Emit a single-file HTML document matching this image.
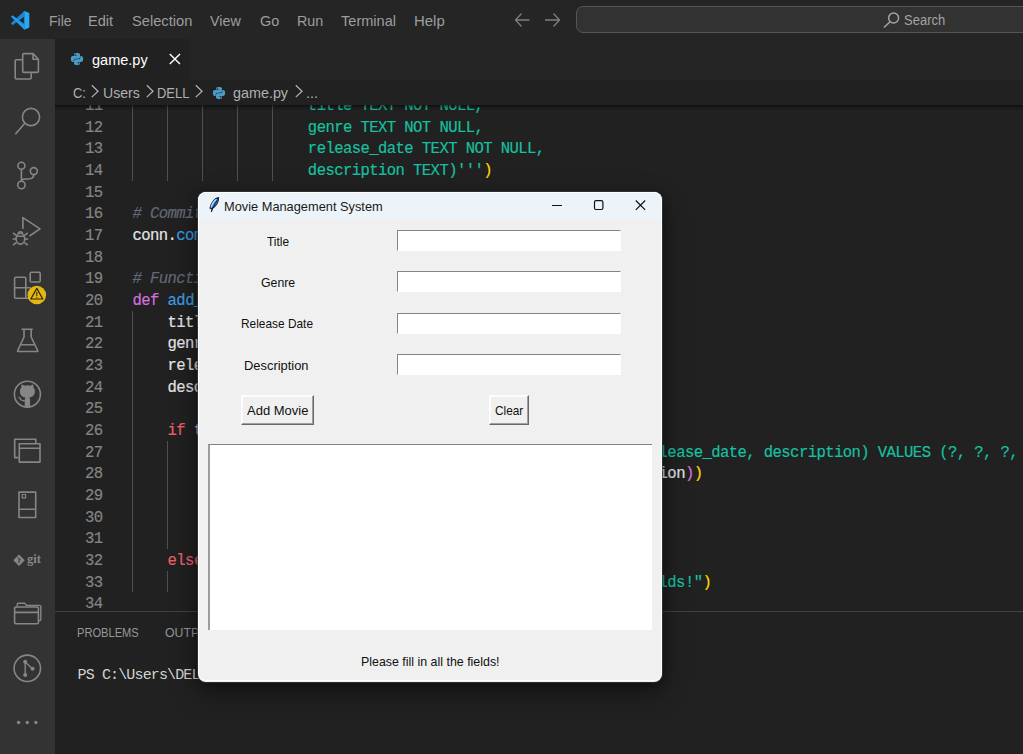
<!DOCTYPE html>
<html lang="en">
<head>
<meta charset="utf-8">
<title>game.py - Visual Studio Code</title>
<style>
html,body{margin:0;padding:0;}
body{width:1023px;height:754px;overflow:hidden;background:#212121;position:relative;font-family:"Liberation Sans",sans-serif;}
.abs{position:absolute;}
.t{position:absolute;white-space:pre;transform-origin:0 50%;line-height:1;}
/* ---------- title bar ---------- */
#titlebar{left:0;top:0;width:1023px;height:39px;background:#252525;}
.menu{color:#9d9d9d;font-size:15px;top:13px;}
#searchbox{left:576px;top:6px;width:460px;height:27px;box-sizing:border-box;border:1px solid #555;border-radius:7px;background:#323232;}
/* ---------- activity bar ---------- */
#activity{left:0;top:39px;width:55px;height:715px;background:#333333;}
/* ---------- tabs ---------- */
#tabbar{left:55px;top:39px;width:968px;height:41px;background:#252525;}
#tab{left:55px;top:39px;width:134.5px;height:41px;background:#212121;}
#crumbs{left:55px;top:80px;width:968px;height:25px;background:#212121;}
.crumb{color:#b0b0b0;font-size:15.5px;top:84.6px;}
/* ---------- editor ---------- */
#editor{left:55px;top:105px;width:968px;height:506px;background:#212121;overflow:hidden;}
#shadow{left:55px;top:105px;width:968px;height:6px;background:linear-gradient(rgba(0,0,0,.55),rgba(0,0,0,.25) 35%,rgba(0,0,0,0));}
.ln{position:absolute;left:0;width:47.6px;text-align:right;color:#858585;}
.cl{position:absolute;left:77.5px;white-space:pre;color:#e6e6e6;}
.code{-webkit-text-stroke:0.18px currentColor;font-family:"Liberation Mono",monospace;font-size:15.6px;letter-spacing:-0.59px;line-height:21.66px;}
.guide{position:absolute;width:1px;background:#4d5156;}
.s{color:#17c0a0;} .k{color:#d270dc;} .c{color:#616a78;font-style:italic;} .f{color:#3b9ee5;} .r{color:#e8606a;} .y{color:#ffd700;} .p{color:#da70d6;}
/* ---------- panel ---------- */
#panel{left:55px;top:611px;width:968px;height:143px;background:#212121;border-top:1px solid #424242;box-sizing:border-box;}
.ptab{color:#969696;font-size:13.2px;top:626px;}
#term{left:77.5px;top:668.2px;height:12.5px;overflow:hidden;color:#d4d4d4;font-family:"Liberation Mono",monospace;font-size:15px;letter-spacing:-0.86px;}
/* ---------- dialog ---------- */
#dlg{left:198px;top:192px;width:464px;height:489.5px;background:#f0f0f0;border-radius:8px;overflow:hidden;box-shadow:0 0 0 1px rgba(70,70,70,.55),0 10px 28px rgba(0,0,0,.45),0 2px 10px rgba(0,0,0,.35);}
#dlgtitle{left:0;top:0;width:464px;height:27.5px;background:#edf4f9;}
#dlgedge{left:0;top:0;width:464px;height:489px;border-radius:8px;box-sizing:border-box;border:1px solid rgba(255,255,255,.85);}
.dl{color:#111;font-size:12.9px;}
.entry{position:absolute;left:199px;width:224px;height:21px;box-sizing:border-box;background:#fff;border-top:1px solid #848484;border-left:1px solid #848484;border-right:1px solid #fff;border-bottom:1px solid #fff;}
.btn{position:absolute;height:30px;box-sizing:border-box;background:#f0f0f0;border-top:1px solid #fff;border-left:1px solid #fff;border-right:1px solid #696969;border-bottom:1px solid #696969;box-shadow:inset -1px -1px 0 #a0a0a0,inset 1px 1px 0 #fbfbfb;}
#listbox{left:10px;top:252px;width:444px;height:185.5px;box-sizing:border-box;background:#fff;border-top:1px solid #828282;border-left:2px solid #9c9c9c;}
</style>
</head>
<body>
<!-- TITLEBAR -->
<div id="titlebar" class="abs">
<svg class="abs" style="left:0;top:0" width="40" height="39" viewBox="0 0 40 39">
<path d="M24.400 11 10.900 23.300 12.500 25.200 24.200 16.700Z" fill="#1489d6"/>
<path d="M24.400 11 29.300 13.100V27.500L24.400 29.700Z" fill="#2aa7f5"/>
<path d="M24.400 29.700 10.900 16.800 12.500 15.200 24.100 23.900 24.400 24Z" fill="#1b9af0"/>
<path d="M24.400 11 24.400 29.700 23.900 29.300 23.900 11.600Z" fill="#2aa7f5"/>
</svg>
<span class="t menu" id="m1" style="transform:scaleX(0.936);left:48.5px">File</span>
<span class="t menu" id="m2" style="transform:scaleX(0.974);left:88.4px">Edit</span>
<span class="t menu" id="m3" style="transform:scaleX(0.978);left:131.9px">Selection</span>
<span class="t menu" id="m4" style="transform:scaleX(0.955);left:210.1px">View</span>
<span class="t menu" id="m5" style="transform:scaleX(0.963);left:259.5px">Go</span>
<span class="t menu" id="m6" style="transform:scaleX(0.955);left:296.8px">Run</span>
<span class="t menu" id="m7" style="transform:scaleX(0.971);left:340.9px">Terminal</span>
<span class="t menu" id="m8" style="transform:scaleX(0.997);left:413.9px">Help</span>
<svg class="abs" style="left:513px;top:11px" width="50" height="18" viewBox="0 0 50 18" fill="none" stroke="#7f7f7f" stroke-width="1.3">
<path d="M16.500 9H2.500M8.500 2.500 2.500 9l6 6.500"/>
<path d="M32 9h14.500M40.500 2.500l6 6.500-6 6.500"/>
</svg>
<div id="searchbox" class="abs"></div>
<svg class="abs" style="left:882px;top:11px" width="19" height="18" viewBox="0 0 19 18" fill="none" stroke="#a3a3a3" stroke-width="1.500">
<circle cx="11.600" cy="7" r="5"/><path d="M8 10.800 2 16.500"/>
</svg>
<span class="t" id="srch" style="transform:scaleX(0.930);left:904.0px;top:13px;color:#a3a3a3;font-size:14px">Search</span>
</div>
<!-- TABS -->
<div id="tabbar" class="abs"></div>
<div id="tab" class="abs"></div>
<svg class="abs" style="left:70px;top:52px" width="14" height="14" viewBox="0 0 32 32"><path fill="#4a9bc8" d="M15.900 2c-7 0-6.600 3-6.600 3v3.200h6.800v1H6.600S2 8.700 2 15.800s4 6.900 4 6.900h2.400v-3.300s-.1-4 3.900-4h6.700s3.800.1 3.800-3.700V5.600S23.400 2 15.900 2zm-3.700 2.100a1.200 1.200 0 1 1 0 2.400 1.200 1.200 0 0 1 0-2.400z"/><path fill="#4a9bc8" d="M16.100 30c7 0 6.600-3 6.600-3v-3.200h-6.800v-1h9.500s4.600.5 4.600-6.600-4-6.900-4-6.900h-2.400v3.300s.1 4-3.900 4h-6.700s-3.800-.1-3.800 3.700v6.100S8.600 30 16.100 30zm3.700-2.100a1.200 1.200 0 1 1 0-2.400 1.200 1.200 0 0 1 0 2.400z"/></svg>
<span class="t" id="tabname" style="transform:scaleX(0.936);left:91.8px;top:52px;color:#ffffff;font-size:15.500px">game.py</span>
<svg class="abs" style="left:168px;top:52px" width="14" height="14" viewBox="0 0 14 14" fill="none" stroke="#ffffff" stroke-width="1.400"><path d="M1.800 2 12 12M12 2 1.800 12"/></svg>
<div id="crumbs" class="abs"></div>
<span class="t crumb" id="c1" style="transform:scaleX(0.830);left:72.9px">C:</span>
<svg class="abs" style="left:91px;top:84px" width="9" height="14" viewBox="0 0 9 14" fill="none" stroke="#b0b0b0" stroke-width="1.300"><path d="M0.800 1.300 7 7.200 0.800 13.100"/></svg>
<span class="t crumb" id="c2" style="transform:scaleX(0.910);left:103.4px">Users</span>
<svg class="abs" style="left:145.5px;top:84px" width="9" height="14" viewBox="0 0 9 14" fill="none" stroke="#b0b0b0" stroke-width="1.300"><path d="M0.800 1.300 7 7.200 0.800 13.100"/></svg>
<span class="t crumb" id="c3" style="transform:scaleX(0.835);left:157.0px">DELL</span>
<svg class="abs" style="left:195px;top:84px" width="9" height="14" viewBox="0 0 9 14" fill="none" stroke="#b0b0b0" stroke-width="1.300"><path d="M0.800 1.300 7 7.200 0.800 13.100"/></svg>
<svg class="abs" style="left:211.5px;top:85.5px" width="14" height="14" viewBox="0 0 32 32"><path fill="#4a9bc8" d="M15.900 2c-7 0-6.600 3-6.600 3v3.200h6.800v1H6.600S2 8.700 2 15.800s4 6.900 4 6.900h2.400v-3.300s-.1-4 3.900-4h6.700s3.800.1 3.800-3.700V5.600S23.400 2 15.900 2zm-3.700 2.100a1.200 1.200 0 1 1 0 2.400 1.200 1.200 0 0 1 0-2.400z"/><path fill="#4a9bc8" d="M16.100 30c7 0 6.600-3 6.600-3v-3.200h-6.800v-1h9.500s4.600.5 4.600-6.600-4-6.900-4-6.900h-2.400v3.300s.1 4-3.900 4h-6.700s-3.800-.1-3.800 3.700v6.100S8.600 30 16.100 30zm3.700-2.100a1.200 1.200 0 1 1 0-2.400 1.200 1.200 0 0 1 0 2.400z"/></svg>
<span class="t crumb" id="c4" style="transform:scaleX(0.926);left:232.5px">game.py</span>
<svg class="abs" style="left:294.5px;top:84px" width="9" height="14" viewBox="0 0 9 14" fill="none" stroke="#b0b0b0" stroke-width="1.300"><path d="M0.800 1.300 7 7.200 0.800 13.100"/></svg>
<span class="t crumb" id="c5" style="transform:scaleX(0.923);left:306.4px">...</span>
<!-- EDITOR -->
<div id="editor" class="abs code">
<div class="guide" style="left:77px;top:-10.84px;height:86.64px"></div>
<div class="guide" style="left:112px;top:-10.84px;height:86.64px"></div>
<div class="guide" style="left:147px;top:-10.84px;height:86.64px"></div>
<div class="guide" style="left:182px;top:-10.84px;height:86.64px"></div>
<div class="guide" style="left:217px;top:-10.84px;height:86.64px"></div>
<div class="guide" style="left:77px;top:205.76px;height:281.58px"></div>
<div class="guide" style="left:112px;top:335.72px;height:108.30px"></div>
<div class="guide" style="left:112px;top:465.68px;height:21.66px"></div>
<div class="ln" style="top:-8.94px">11</div><div class="cl" style="top:-8.94px">                    <span class="s">title TEXT NOT NULL,</span></div>
<div class="ln" style="top:12.72px">12</div><div class="cl" style="top:12.72px">                    <span class="s">genre TEXT NOT NULL,</span></div>
<div class="ln" style="top:34.38px">13</div><div class="cl" style="top:34.38px">                    <span class="s">release_date TEXT NOT NULL,</span></div>
<div class="ln" style="top:56.04px">14</div><div class="cl" style="top:56.04px">                    <span class="s">description TEXT)'''</span><span class="y">)</span></div>
<div class="ln" style="top:77.70px">15</div><div class="cl" style="top:77.70px"></div>
<div class="ln" style="top:99.36px">16</div><div class="cl" style="top:99.36px"><span class="c"># Commit the changes</span></div>
<div class="ln" style="top:121.02px">17</div><div class="cl" style="top:121.02px">conn.<span class="f">commit</span><span class="y">()</span></div>
<div class="ln" style="top:142.68px">18</div><div class="cl" style="top:142.68px"></div>
<div class="ln" style="top:164.34px">19</div><div class="cl" style="top:164.34px"><span class="c"># Function to add a movie</span></div>
<div class="ln" style="top:186.00px">20</div><div class="cl" style="top:186.00px"><span class="k">def</span> <span class="f">add_movie</span><span class="y">()</span>:</div>
<div class="ln" style="top:207.66px">21</div><div class="cl" style="top:207.66px">    title = title_entry.<span class="f">get</span><span class="y">()</span></div>
<div class="ln" style="top:229.32px">22</div><div class="cl" style="top:229.32px">    genre = genre_entry.<span class="f">get</span><span class="y">()</span></div>
<div class="ln" style="top:250.98px">23</div><div class="cl" style="top:250.98px">    release_date = release_date_entry.<span class="f">get</span><span class="y">()</span></div>
<div class="ln" style="top:272.64px">24</div><div class="cl" style="top:272.64px">    description = description_entry.<span class="f">get</span><span class="y">()</span></div>
<div class="ln" style="top:294.30px">25</div><div class="cl" style="top:294.30px"></div>
<div class="ln" style="top:315.96px">26</div><div class="cl" style="top:315.96px">    <span class="r">if</span> title <span class="r">and</span> genre <span class="r">and</span> release_date <span class="r">and</span> description:</div>
<div class="ln" style="top:337.62px">27</div><div class="cl" style="top:337.62px">        cursor.<span class="f">execute</span><span class="y">(</span><span class="s">"INSERT INTO movies (title, genre, release_date, description) VALUES (?, ?, ?, ?)"</span>,</div>
<div class="ln" style="top:359.28px">28</div><div class="cl" style="top:359.28px">                       <span class="p">(</span>title, genre, release_date, description<span class="p">)</span><span class="y">)</span></div>
<div class="ln" style="top:380.94px">29</div><div class="cl" style="top:380.94px">        conn.<span class="f">commit</span><span class="y">()</span></div>
<div class="ln" style="top:402.60px">30</div><div class="cl" style="top:402.60px">        status_label.<span class="f">config</span><span class="y">(</span>text=<span class="s">"Movie added!"</span><span class="y">)</span></div>
<div class="ln" style="top:424.26px">31</div><div class="cl" style="top:424.26px">        <span class="f">clear_fields</span><span class="y">()</span></div>
<div class="ln" style="top:445.92px">32</div><div class="cl" style="top:445.92px">    <span class="r">else</span>:</div>
<div class="ln" style="top:467.58px">33</div><div class="cl" style="top:467.58px">        status_label.<span class="f">config</span><span class="y">(</span>text=<span class="s">"Please fill in all the fields!"</span><span class="y">)</span></div>
<div class="ln" style="top:489.24px">34</div><div class="cl" style="top:489.24px"></div>
</div>
<div id="shadow" class="abs"></div>
<!-- PANEL -->
<div id="panel" class="abs"></div>
<span class="t ptab" id="p1" style="transform:scaleX(0.843);left:76.9px">PROBLEMS</span>
<span class="t ptab" id="p2" style="transform:scaleX(0.930);left:165.4px">OUTPUT</span>
<span class="t" id="term">PS C:\Users\DELL&gt; python game.py</span>
<!-- ACTIVITY -->
<div id="activity" class="abs">
<svg class="abs" style="left:0;top:0" width="55" height="715" viewBox="0 39 55 715" fill="none" stroke="#868686" stroke-width="1.600" stroke-linejoin="round" stroke-linecap="butt">
<!-- files -->
<path d="M22.700 59.800H16.400a1.200 1.200 0 0 0-1.200 1.200v16.800a1.200 1.200 0 0 0 1.200 1.200h13.600a1.200 1.200 0 0 0 1.200-1.200v-4.600"/>
<path d="M33 53.600H23.900a1.200 1.200 0 0 0-1.200 1.200v16.400a1.200 1.200 0 0 0 1.200 1.200h13.300a1.200 1.200 0 0 0 1.200-1.200V59.200zM33 53.600v5.600h5.400"/>
<!-- search -->
<circle cx="31" cy="117" r="8.600"/><path d="M24.800 123.200 15.300 134.300"/>
<!-- source control -->
<circle cx="21.400" cy="165.800" r="3.500"/><circle cx="33.800" cy="171.100" r="3.500"/><circle cx="21.400" cy="185" r="3.700"/>
<path d="M21.400 169.300v12M33.800 174.600c0 3.400-2.400 4.400-5.400 4.400h-3.400c-2.200 0-3.600.6-3.600 2.400"/>
<!-- run and debug -->
<path d="M22.900 229V217.600L40 228.800 29.500 236"/>
<ellipse cx="20.400" cy="238.700" rx="4.300" ry="5.400"/>
<path d="M16.200 236.300h8.400M13 233l3.400 2.300M27.800 233l-3.400 2.300M12.600 239h3.500M24.700 239h3.500M13 245l3.400-2.300M27.800 245l-3.400-2.300M18 233.400a2.600 2.600 0 0 1 4.800 0"/>
<!-- extensions -->
<path d="M25.800 287.800V278.400a1.200 1.200 0 0 0-1.200-1.200H15.800a1.200 1.200 0 0 0-1.200 1.200v18.600a1.200 1.200 0 0 0 1.200 1.200H30M14.600 287.800H31M25.800 287.800V298"/>
<rect x="30.200" y="272.200" width="10" height="9.800" rx="1.200"/>
<!-- flask -->
<path d="M21.600 329.200h11.200M24 329.200v7.800L17.600 350.800a.5.500 0 0 0 .5.700h19.200a.5.500 0 0 0 .5-.7L31.200 337v-7.800M20.800 344.700h13.600"/>
<!-- github -->
<circle cx="27.400" cy="394.200" r="13"/>
<!-- window -->
<path d="M18.500 457.600H14.700V439.200H35.800V443"/>
<path d="M19.300 443.700H40v18.400H19.300zM19.300 448.200H40"/>
<!-- device -->
<path d="M19 492.100H35.700V517.500H19zM19 509.300H35.700"/>
<rect x="22.200" y="494.500" width="3.400" height="3.400" stroke-width="1.200"/>
<!-- folders -->
<path d="M17.200 606.600V604.400a1.200 1.200 0 0 1 1.200-1.200h6.200l2.200 2.200H39.600a1.200 1.200 0 0 1 1.200 1.200V619.400a1.200 1.200 0 0 1-1.200 1.200H38.800" stroke-width="1.400"/>
<path d="M15.800 607H37.200a1.200 1.200 0 0 1 1.200 1.200V622.600a1.200 1.200 0 0 1-1.200 1.200H15.800a1.200 1.200 0 0 1-1.200-1.200V608.200a1.200 1.200 0 0 1 1.200-1.200zM14.600 612.400H38.400"/>
<!-- git graph -->
<circle cx="27.300" cy="668.300" r="13.200"/>
<path d="M25.200 662.500v12M26.200 663l6 5.500" stroke-width="1.400"/>
</svg>
<svg class="abs" style="left:0;top:0" width="55" height="715" viewBox="0 39 55 715" fill="#868686" stroke="none">
<!-- github cat -->
<path transform="translate(27.400 393) scale(1.120 1.050) translate(-27.400 -393)" d="M27.400 385.600c-.9 0-1.900.2-2.700.5-1.300-1-2.400-1.200-2.400-1.200-.5 1.200-.3 2.300-.1 2.700-.9 1-1.500 2.300-1.500 3.800 0 4.300 2.600 5.600 5 6-.5.500-.7 1.300-.7 2.300v6.800h4.800v-6.800c0-1-.2-1.800-.7-2.300 2.400-.4 5-1.700 5-6 0-1.500-.6-2.800-1.500-3.800.2-.4.400-1.500-.1-2.700 0 0-1.100.2-2.400 1.200-.8-.3-1.800-.5-2.700-.5z"/>
<path d="M18.600 396.600c1.600.2 2 1.800 2.800 2.600.9.900 2.200.9 3.400.7l.2 1.300c-2 .4-3.600-.1-4.600-1.300-.8-1-1-2.100-2.100-2.400z"/>
<!-- git logo diamond -->
<path d="M19 554.600l5.700 5.700-5.700 5.700-5.700-5.700z"/>
<!-- git graph nodes -->
<circle cx="25.200" cy="661.800" r="2"/><circle cx="25.200" cy="675" r="2"/><circle cx="32.600" cy="668.800" r="2"/>
<!-- dots -->
<circle cx="18.600" cy="722.500" r="1.700"/><circle cx="27.300" cy="722.500" r="1.700"/><circle cx="35.900" cy="722.500" r="1.700"/>
<!-- badge -->
<circle cx="36.800" cy="295" r="9.300" fill="#e2b714"/>
<path d="M36.800 288.400l6 10.600h-12z" fill="none" stroke="#2b2400" stroke-width="1.200" stroke-linejoin="round"/>
<path d="M36.300 292h1v4h-1zM36.300 296.800h1v1h-1z" fill="#2b2400"/>
</svg>
<svg class="abs" style="left:13px;top:515px" width="12" height="12" viewBox="0 0 12 12" fill="none" stroke="#333" stroke-width="1"><path d="M4.600 3.200 7.800 6.400M6 4.600V9"/></svg>
<span class="t" id="gittxt" style="left:27px;top:514px;color:#868686;font-size:12.500px;font-weight:bold;font-family:'Liberation Serif',serif">git</span>
</div>
<!-- DIALOG -->
<div id="dlg" class="abs">
<div id="dlgtitle" class="abs"></div>
<svg class="abs" style="left:8px;top:3px" width="16" height="20" viewBox="206 195 16 20">
<path d="M218.600 197.600c-3.400.6-7.400 4.400-8.600 10.600l2 .5c3.600-2.200 6.600-6.300 6.600-11.100z" fill="#2f86ec" stroke="#16213f" stroke-width="1.100" stroke-linejoin="round"/>
<path d="M216.600 199.400c-2.400 1.600-4.600 4.600-5.400 8" stroke="#a9defc" stroke-width="1.300" fill="none"/>
<path d="M217.400 199.600l-4.800 8.400" stroke="#10182e" stroke-width=".9" fill="none"/>
<path d="M212.600 208l-1.300 3.700" stroke="#10182e" stroke-width="1.300" fill="none"/>
</svg>
<span class="t" id="dtitle" style="transform:scaleX(0.985);left:26.4px;top:7.500px;color:#1a1a1a;font-size:13px">Movie Management System</span>
<svg class="abs" style="left:350px;top:4px" width="104" height="18" viewBox="0 0 104 18" fill="none" stroke="#111" stroke-width="1.200">
<path d="M4 9.500h10"/>
<rect x="46.500" y="4.700" width="8.400" height="8.800" rx="1.500"/>
<path d="M87.800 4.500l9.400 9.400M97.200 4.500l-9.400 9.400"/>
</svg>
<span class="t dl" id="l1" style="transform:scaleX(0.927);left:68.5px;top:43.5px">Title</span>
<span class="t dl" id="l2" style="transform:scaleX(0.954);left:62.6px;top:84.8px">Genre</span>
<span class="t dl" id="l3" style="transform:scaleX(0.922);left:43.2px;top:126.1px">Release Date</span>
<span class="t dl" id="l4" style="transform:scaleX(1.001);left:46.1px;top:167.5px">Description</span>
<div class="entry" style="top:38px"></div>
<div class="entry" style="top:79.300px"></div>
<div class="entry" style="top:120.600px"></div>
<div class="entry" style="top:162px"></div>
<div class="btn" style="left:42.500px;top:202.500px;width:73px"></div>
<div class="btn" style="left:291px;top:202.500px;width:40px"></div>
<span class="t dl" id="b1" style="transform:scaleX(1.008);left:48.7px;top:212.5px">Add Movie</span>
<span class="t dl" id="b2" style="transform:scaleX(0.919);left:296.5px;top:212.5px">Clear</span>
<div id="listbox" class="abs"></div>
<div id="dlgedge" class="abs"></div>
<span class="t dl" id="status" style="transform:scaleX(0.962);left:162.9px;top:464.0px">Please fill in all the fields!</span>
</div>
</body>
</html>
